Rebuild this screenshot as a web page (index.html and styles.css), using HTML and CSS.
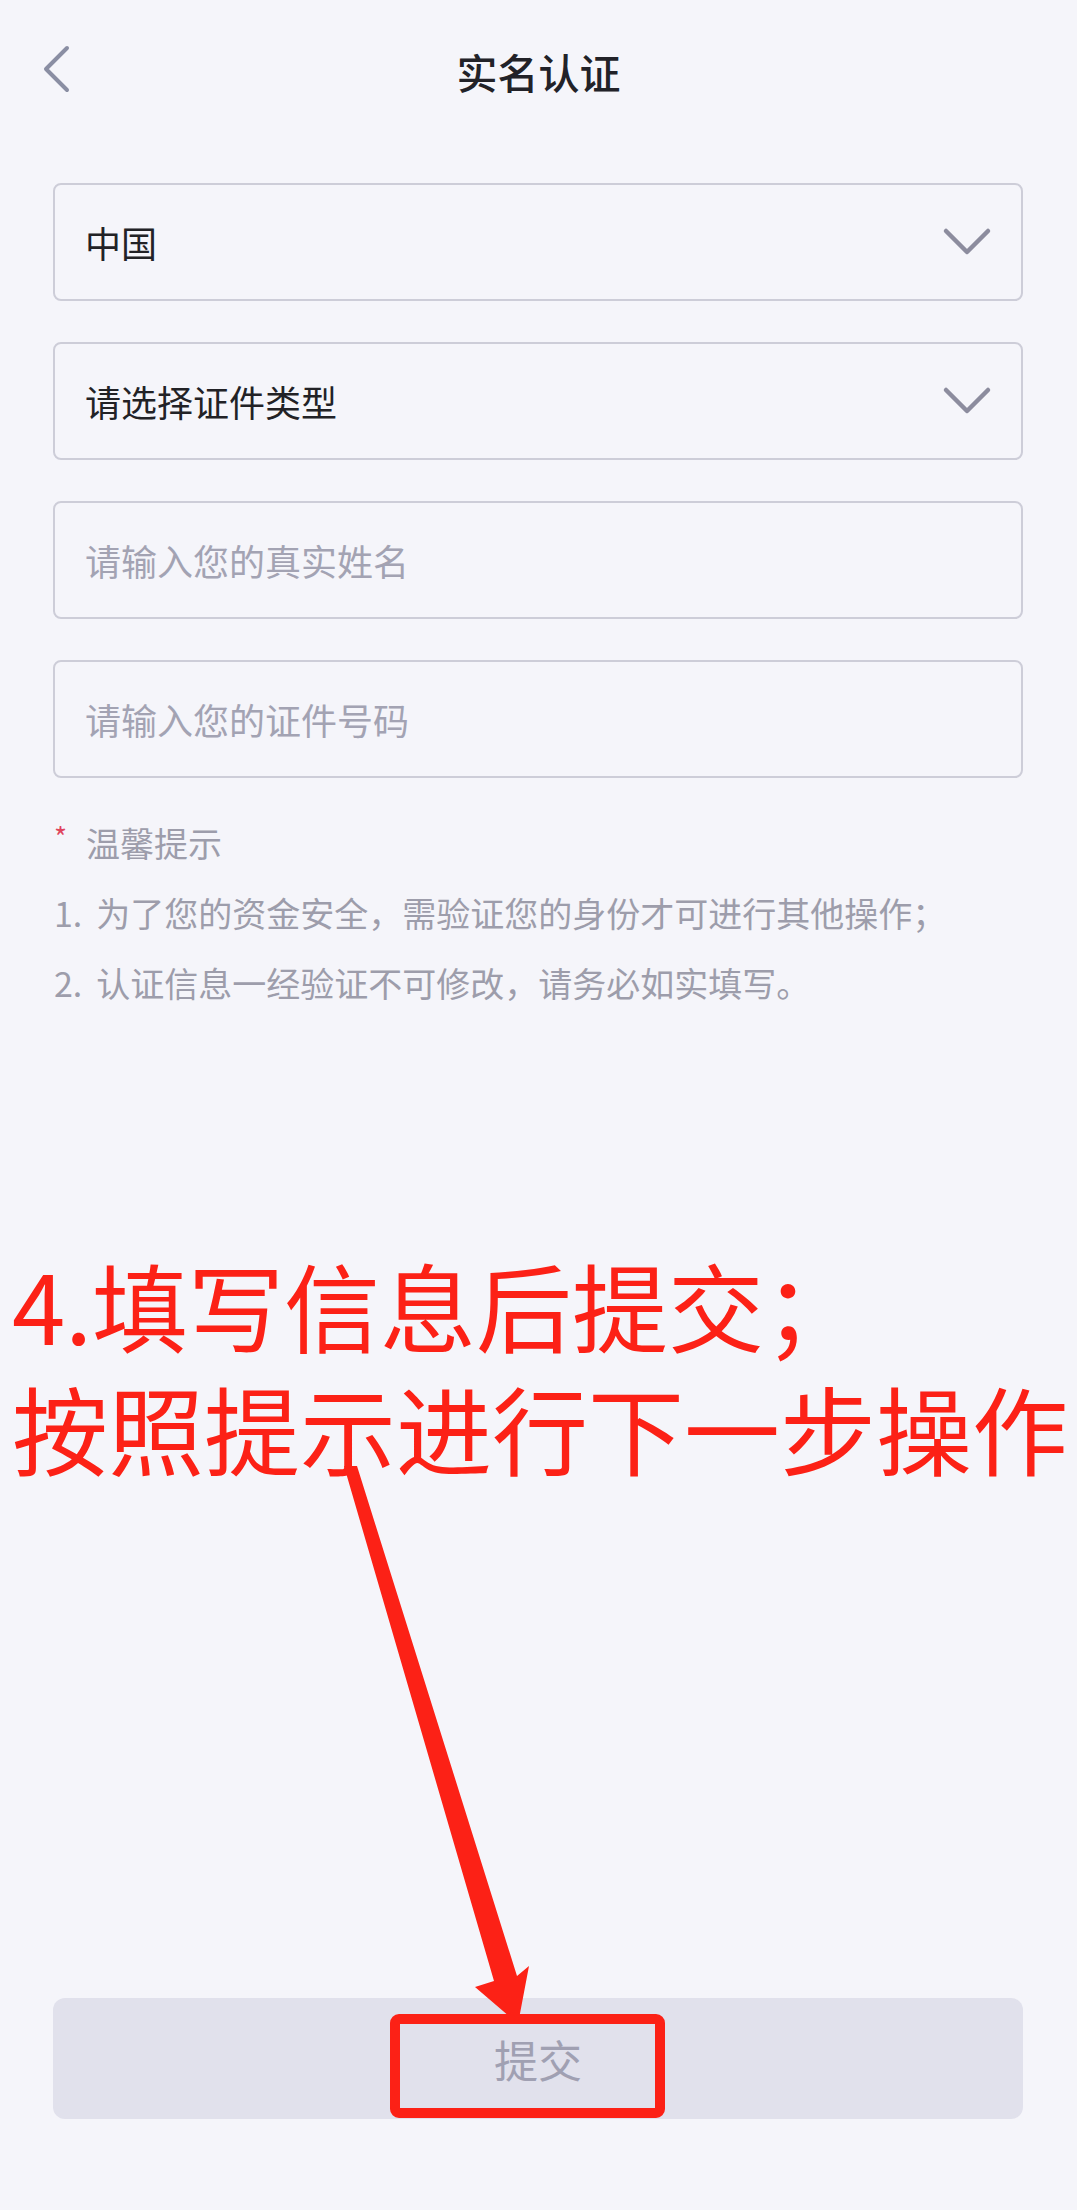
FILE: index.html
```html
<!DOCTYPE html>
<html lang="zh-CN">
<head>
<meta charset="utf-8">
<title>实名认证</title>
<link rel="stylesheet" href="styles.css">
</head>
<body>
<div class="page">
  <header class="nav">
    <span class="back">
      <svg width="28" height="50" viewBox="0 0 28 50"><polyline points="24,4 3,25 24,46" fill="none" stroke="#8a8ea3" stroke-width="4" stroke-linecap="round" stroke-linejoin="round"/></svg>
    </span>
    <h1 class="title">实名认证</h1>
    <span></span>
  </header>

  <main class="form">
    <div class="field">
      <span class="value">中国</span>
      <svg class="chev" width="50" height="30" viewBox="0 0 50 30"><polyline points="4,4 25,25 46,4" fill="none" stroke="#8c8c9e" stroke-width="4.5" stroke-linecap="round" stroke-linejoin="round"/></svg>
    </div>
    <div class="field">
      <span class="value">请选择证件类型</span>
      <svg class="chev" width="50" height="30" viewBox="0 0 50 30"><polyline points="4,4 25,25 46,4" fill="none" stroke="#8c8c9e" stroke-width="4.5" stroke-linecap="round" stroke-linejoin="round"/></svg>
    </div>
    <div class="field">
      <span class="placeholder">请输入您的真实姓名</span>
    </div>
    <div class="field">
      <span class="placeholder">请输入您的证件号码</span>
    </div>
  </main>

  <section class="tips">
    <div class="tips-title"><span class="star">*</span>温馨提示</div>
    <div class="tip"><span class="num">1.</span>为了您的资金安全，需验证您的身份才可进行其他操作；</div>
    <div class="tip"><span class="num">2.</span>认证信息一经验证不可修改，请务必如实填写。</div>
  </section>

  <section class="annotation">
    <div class="note-line">4.填写信息后提交<span class="punct">；</span></div>
    <div class="note-line">按照提示进行下一步操作</div>
  </section>

  <footer class="footer">
    <button class="submit" type="button">提交</button>
  </footer>

  <svg class="overlay" width="1077" height="2210" viewBox="0 0 1077 2210">
    <polygon points="344,1466 357,1466 517,1976 529,1966 518,2024 475,1987 494,1981" fill="#fc2116"/>
    <rect x="395" y="2019" width="265" height="94" rx="4" ry="4" fill="none" stroke="#fc2116" stroke-width="10"/>
  </svg>
</div>
</body>
</html>
```

FILE: styles.css
```css
html, body {
  margin: 0;
  padding: 0;
  background: #f5f5fa;
}

body {
  font-family: "Noto Sans CJK SC", "Noto Sans", sans-serif;
  color: #222;
}

.page {
  position: relative;
  width: 1077px;
  min-height: 2210px;
  display: flex;
  flex-direction: column;
  box-sizing: border-box;
}

.nav {
  height: 143px;
  display: grid;
  grid-template-columns: 1fr auto 1fr;
  align-items: center;
}

.back {
  display: flex;
  align-items: center;
  padding-left: 43px;
  margin-bottom: 6px;
}

.title {
  margin: 0;
  font-size: 41px;
  font-weight: 500;
  color: #222228;
  line-height: 1;
}

.form {
  margin-top: 40px;
  padding: 0 54px 0 53px;
  display: flex;
  flex-direction: column;
  gap: 41px;
}

.field {
  height: 118px;
  box-sizing: border-box;
  border: 2px solid #cdcdd8;
  border-radius: 8px;
  display: flex;
  align-items: center;
  justify-content: space-between;
  padding: 0 29px 0 30px;
  font-size: 36px;
}

.value {
  color: #222226;
}

.placeholder {
  color: #a3a3b3;
}

.chev {
  display: block;
}

.tips {
  margin-top: 30px;
  padding-left: 54px;
  font-size: 34px;
  line-height: 70px;
  color: #9d9dab;
}

.tips-title {
  display: flex;
  align-items: flex-start;
}

.star {
  color: #e0455d;
  font-size: 28px;
  line-height: 56px;
  width: 32px;
}

.num {
  margin-right: 14px;
}

.annotation {
  margin-top: 224px;
  padding-left: 12px;
  font-size: 96px;
  line-height: 123px;
  color: #fc2116;
  white-space: nowrap;
}

.punct {
  font-family: "Noto Sans CJK TC", sans-serif;
}

.footer {
  margin-top: auto;
  padding: 0 54px 91px 53px;
}

.submit {
  display: block;
  width: 100%;
  height: 121px;
  border: none;
  border-radius: 12px;
  background: #e1e1ec;
  color: #a0a0b2;
  font-family: "Noto Sans CJK SC", sans-serif;
  font-size: 44px;
  padding: 0;
}

.overlay {
  position: absolute;
  top: 0;
  left: 0;
  pointer-events: none;
}
```
